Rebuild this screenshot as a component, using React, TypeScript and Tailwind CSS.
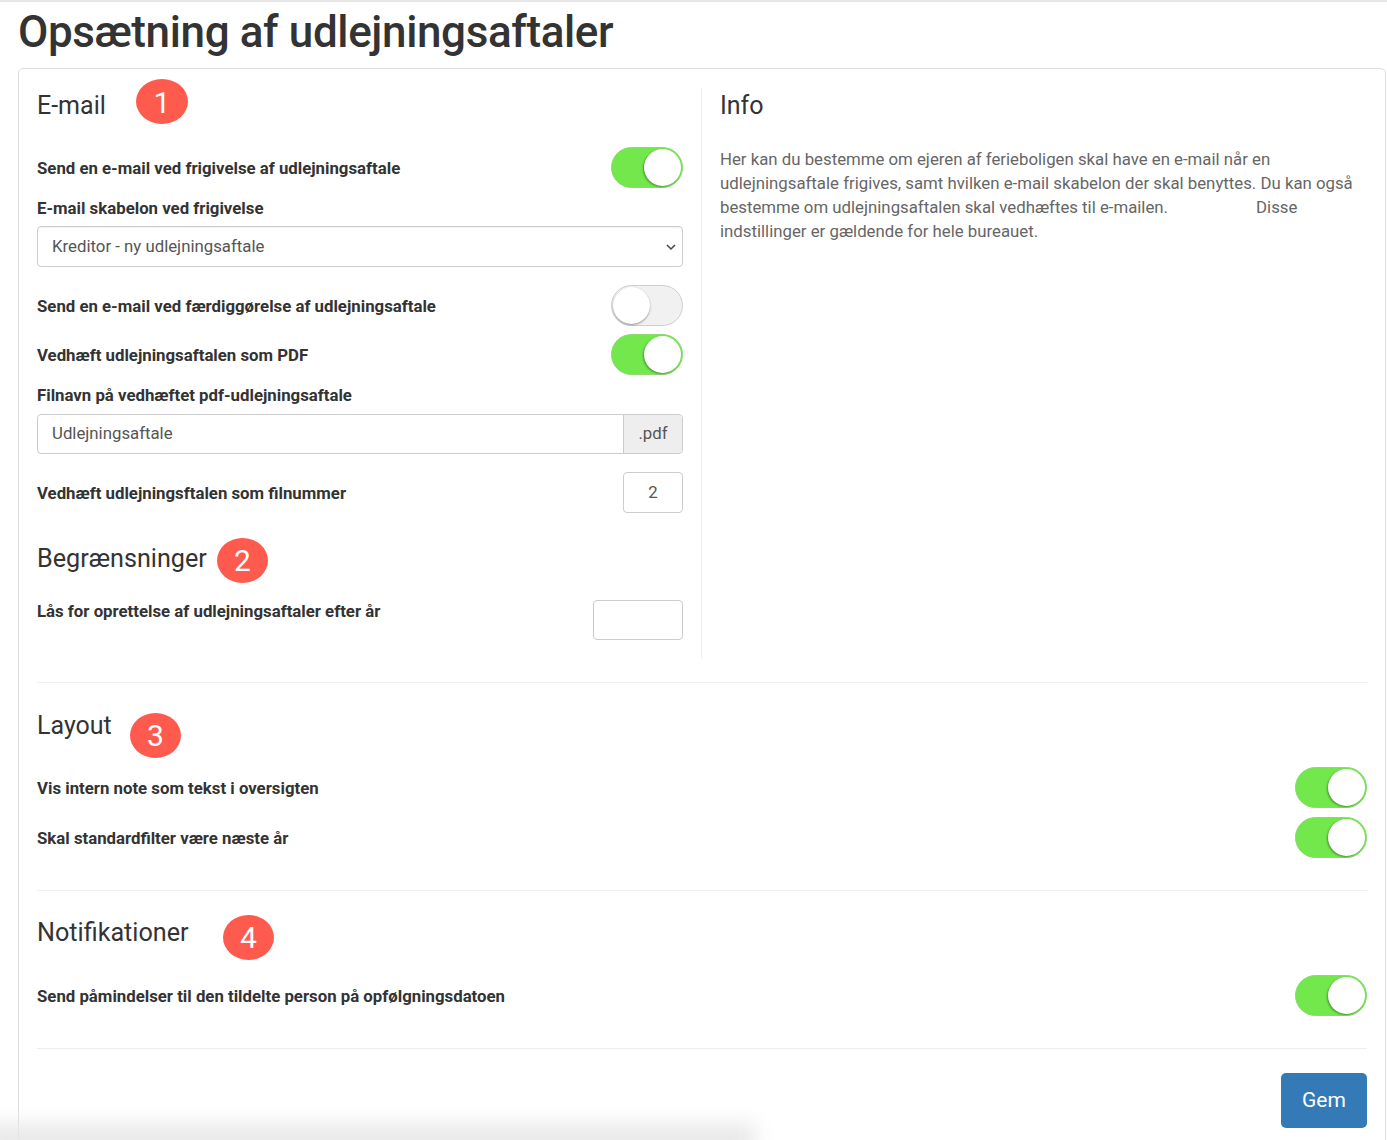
import React from "react";

function Toggle({ on }: { on: boolean }) {
  return on ? (
    <div className="relative w-[72px] h-[41px] shrink-0 rounded-full bg-[#72e84c] border border-[#8cd873]">
      <div className="absolute right-[1px] top-[1px] w-[37px] h-[37px] rounded-full bg-white shadow-[-1px_1px_2px_rgba(0,0,0,0.35)]" />
    </div>
  ) : (
    <div className="relative w-[72px] h-[41px] shrink-0 rounded-full bg-[#f1f1f1] border border-[#cfcfcf]">
      <div className="absolute left-[1px] top-[1px] w-[37px] h-[37px] rounded-full bg-white shadow-[0_1px_2px_rgba(0,0,0,0.4)]" />
    </div>
  );
}

function Badge({ n }: { n: number }) {
  return (
    <div className="w-[51px] h-[45px] rounded-[50%] bg-[#ff5a4e] text-white text-[30px] leading-[46px] text-center shrink-0">
      {n}
    </div>
  );
}

function Label({ children }: { children: React.ReactNode }) {
  return <div className="text-[16.8px] font-bold leading-[20px] text-[#333]">{children}</div>;
}

function ToggleRow({ label, on, className }: { label: string; on: boolean; className: string }) {
  return (
    <div className={"flex items-center justify-between " + className}>
      <Label>{label}</Label>
      <Toggle on={on} />
    </div>
  );
}

export default function App() {
  return (
    <div className="relative h-[1140px] overflow-hidden bg-white font-['Roboto',sans-serif] text-[#333]">
      <div className="h-[2px] bg-[#e7e7e7]" />
      <h1 className="ml-[18px] mt-[4px] h-[62px] text-[44px] leading-[52px] font-medium tracking-[-0.38px] text-[#333]">
        Opsætning af udlejningsaftaler
      </h1>
      <div className="ml-[18px] mr-px h-[1100px] rounded-[5px] border border-[#dddddd] px-[18px] pt-[10px]">
        {/* top */}
        <div className="flex h-[603px]">
          <div className="w-[665px] shrink-0 pr-[18px] border-r border-[#eeeeee] mt-[9px] h-[571px]">
            <div className="flex h-[45px] -mt-[9px] items-center">
              <h2 className="text-[25px] leading-[30px] pt-[8px] w-[99px]">E-mail</h2>
              <div className="w-[52px] h-[45px] rounded-[50%] bg-[#ff5a4e] text-white text-[30px] leading-[47px] text-center shrink-0">1</div>
            </div>
            <ToggleRow label="Send en e-mail ved frigivelse af udlejningsaftale" on className="mt-[23px]" />
            <div className="mt-[10px]"><Label>E-mail skabelon ved frigivelse</Label></div>
            <div className="mt-[8px] h-[41px] rounded-[4px] border border-[#cccccc] flex items-center justify-between pl-[14px] pr-[5px] text-[16.8px] text-[#555] shadow-[inset_0_1px_1px_rgba(0,0,0,0.05)]">
              <span>Kreditor - ny udlejningsaftale</span>
              <svg width="12" height="12" viewBox="0 0 12 12" fill="none" stroke="#444" strokeWidth="1.5">
                <path d="M2 4l4 4 4-4" />
              </svg>
            </div>
            <ToggleRow label="Send en e-mail ved færdiggørelse af udlejningsaftale" on={false} className="mt-[18px]" />
            <ToggleRow label="Vedhæft udlejningsaftalen som PDF" on className="mt-[8px]" />
            <div className="mt-[10px]"><Label>Filnavn på vedhæftet pdf-udlejningsaftale</Label></div>
            <div className="mt-[9px] h-[40px] flex rounded-[4px] border border-[#cccccc] text-[16.8px] text-[#555]">
              <div className="flex-1 flex items-center pl-[14px]">Udlejningsaftale</div>
              <div className="w-[59px] flex items-center justify-center bg-[#eeeeee] border-l border-[#cccccc] rounded-r-[4px]">.pdf</div>
            </div>
            <div className="mt-[18px] flex items-center justify-between">
              <Label>Vedhæft udlejningsftalen som filnummer</Label>
              <div className="w-[60px] h-[41px] rounded-[4px] border border-[#cccccc] flex items-center justify-center text-[16.8px] text-[#555]">2</div>
            </div>
            <div className="flex h-[45px] mt-[25px] items-center">
              <h2 className="text-[25.2px] leading-[30px] w-[180px] -mt-[4px]">Begrænsninger</h2>
              <Badge n={2} />
            </div>
            <div className="mt-[17px] flex items-start justify-between">
              <div className="pt-[1px]"><Label>Lås for oprettelse af udlejningsaftaler efter år</Label></div>
              <div className="w-[90px] h-[40px] rounded-[4px] border border-[#cccccc]" />
            </div>
          </div>
          <div className="flex-1 pl-[18px] mt-[9px]">
            <h2 className="text-[25px] leading-[30px] pt-[3px]">Info</h2>
            <p className="mt-[26px] text-[16.8px] leading-[24px] text-[#666]">
              Her kan du bestemme om ejeren af ferieboligen skal have en e-mail når en udlejningsaftale frigives, samt hvilken e-mail skabelon der skal benyttes. Du kan også bestemme om udlejningsaftalen skal vedhæftes til e-mailen.
              <span className="ml-[84px] pl-[4px]">Disse</span> indstillinger er gældende for hele bureauet.
            </p>
          </div>
        </div>

        <div className="h-px bg-[#eeeeee]" />

        {/* layout */}
        <div className="flex h-[45px] mt-[30px] items-center">
          <h2 className="text-[25px] leading-[30px] w-[93px] -mt-[20px]">Layout</h2>
          <Badge n={3} />
        </div>
        <ToggleRow label="Vis intern note som tekst i oversigten" on className="mt-[9px]" />
        <ToggleRow label="Skal standardfilter være næste år" on className="mt-[9px]" />
        <div className="mt-[32px] h-px bg-[#eeeeee]" />

        {/* notifikationer */}
        <div className="flex h-[45px] mt-[24px] items-center">
          <h2 className="text-[25.2px] leading-[30px] w-[186px] -mt-[10px]">Notifikationer</h2>
          <Badge n={4} />
        </div>
        <ToggleRow label="Send påmindelser til den tildelte person på opfølgningsdatoen" on className="mt-[15px]" />
        <div className="mt-[32px] h-px bg-[#eeeeee]" />

        <div className="mt-[24px] flex justify-end">
          <button className="w-[86px] h-[55px] rounded-[5px] bg-[#337ab7] text-white text-[21px]">Gem</button>
        </div>
      </div>
      <div className="absolute -left-[20px] -bottom-[14px] w-[775px] h-[30px] bg-[#e8e8e8] blur-[10px] pointer-events-none" />
    </div>
  );
}
